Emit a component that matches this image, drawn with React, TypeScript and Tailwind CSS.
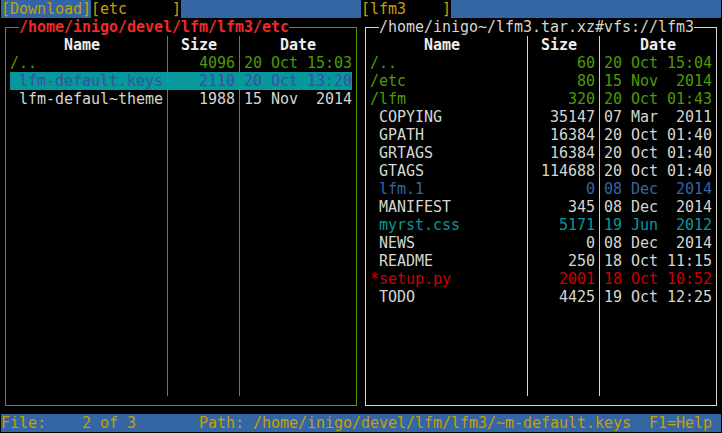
import React from "react";

type Entry = { name: string; size: string; date: string; tone: string };

const GREEN = "text-[#4e9a06]";
const WHITE = "text-[#d3d7cf]";

const LEFT: Entry[] = [
  { name: "/..", size: "4096", date: "20 Oct 15:03", tone: GREEN },
  { name: " lfm-default.keys", size: "2110", date: "20 Oct 13:20", tone: "text-[#3d4fa2]" },
  { name: " lfm-defaul~theme", size: "1988", date: "15 Nov  2014", tone: WHITE },
];

const RIGHT: Entry[] = [
  { name: "/..", size: "60", date: "20 Oct 15:04", tone: GREEN },
  { name: "/etc", size: "80", date: "15 Nov  2014", tone: GREEN },
  { name: "/lfm", size: "320", date: "20 Oct 01:43", tone: GREEN },
  { name: " COPYING", size: "35147", date: "07 Mar  2011", tone: WHITE },
  { name: " GPATH", size: "16384", date: "20 Oct 01:40", tone: WHITE },
  { name: " GRTAGS", size: "16384", date: "20 Oct 01:40", tone: WHITE },
  { name: " GTAGS", size: "114688", date: "20 Oct 01:40", tone: WHITE },
  { name: " lfm.1", size: "0", date: "08 Dec  2014", tone: "text-[#3465a4]" },
  { name: " MANIFEST", size: "345", date: "08 Dec  2014", tone: WHITE },
  { name: " myrst.css", size: "5171", date: "19 Jun  2012", tone: "text-[#06989a]" },
  { name: " NEWS", size: "0", date: "08 Dec  2014", tone: WHITE },
  { name: " README", size: "250", date: "18 Oct 11:15", tone: WHITE },
  { name: "*setup.py", size: "2001", date: "18 Oct 10:52", tone: "text-[#cc0000]" },
  { name: " TODO", size: "4425", date: "19 Oct 12:25", tone: WHITE },
];

function Sep({ line }: { line: string }) {
  return (
    <div className="flex w-[9px] justify-center">
      <div className={`h-full w-px ${line}`} />
    </div>
  );
}

function Row({
  entry,
  line,
  cursor,
  header,
}: {
  entry?: Entry;
  line: string;
  cursor?: boolean;
  header?: boolean;
}) {
  const tone = header ? "font-bold text-[#eeeeec]" : entry?.tone ?? WHITE;
  return (
    <div className={`flex h-[18px] whitespace-pre ${tone} ${cursor ? "bg-[#06989a]" : ""}`}>
      <div className="w-[153px] overflow-hidden">{header ? "      Name" : entry?.name}</div>
      <Sep line={line} />
      <div className={`w-[63px] ${header ? "" : "text-right"}`}>{header ? " Size" : entry?.size}</div>
      <Sep line={line} />
      <div className="w-[108px]">{header ? "    Date" : entry?.date}</div>
    </div>
  );
}

function Panel({
  title,
  titleTone,
  border,
  line,
  entries,
  cursorAt,
}: {
  title: string;
  titleTone: string;
  border: string;
  line: string;
  entries: Entry[];
  cursorAt?: number;
}) {
  const rows = Array.from({ length: 19 }, (_, i) => entries[i]);
  return (
    <div className="relative h-[396px] w-[360px] px-[4px] pb-[8px] pt-[9px]">
      <div className={`h-full border ${border} px-[4px] pb-[9px] pt-[8px]`}>
        <Row header line={line} />
        {rows.map((e, i) => (
          <Row key={i} entry={e} line={line} cursor={i === cursorAt} />
        ))}
      </div>
      <div className={`absolute left-[18px] top-0 h-[18px] whitespace-pre bg-black ${titleTone}`}>
        {title}
      </div>
    </div>
  );
}

export default function App() {
  return (
    <div className="h-[433px] w-[722px] overflow-hidden bg-black pl-px font-['DejaVu_Sans_Mono',monospace] text-[15px] leading-[18px] tracking-[-0.03px]">
      <div className="flex h-[18px] whitespace-pre text-[#c4a000]">
        <div className="w-[90px] bg-[#3465a4]">[Download]</div>
        <div className="w-[90px]">[etc     ]</div>
        <div className="w-[180px] bg-[#3465a4]" />
        <div className="w-[90px]">[lfm3    ]</div>
        <div className="w-[270px] bg-[#3465a4]" />
      </div>
      <div className="flex">
        <Panel
          title="/home/inigo/devel/lfm/lfm3/etc"
          titleTone="font-bold text-[#ef2929]"
          border="border-[#4e9a06]"
          line="bg-[#4e9a06]"
          entries={LEFT}
          cursorAt={1}
        />
        <Panel
          title="/home/inigo~/lfm3.tar.xz#vfs://lfm3"
          titleTone={WHITE}
          border="border-[#d3d7cf]"
          line="bg-[#d3d7cf]"
          entries={RIGHT}
        />
      </div>
      <div className="flex h-[18px] w-[720px] whitespace-pre bg-[#3465a4] text-[#c4a000]">
        {"File:    2 of 3       Path: /home/inigo/devel/lfm/lfm3/~m-default.keys  F1=Help "}
      </div>
    </div>
  );
}
